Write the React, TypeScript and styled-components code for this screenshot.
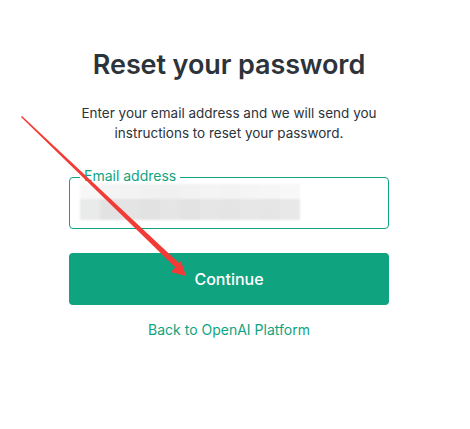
import React from "react";
import styled, { createGlobalStyle } from "styled-components";

const Global = createGlobalStyle`
  html, body { margin: 0; padding: 0; background: #fff; }
  body { font-family: Inter, "Noto Sans", Arial, sans-serif; }
`;

const Page = styled.div`
  position: relative;
  width: 458px;
  height: 429px;
  display: flex;
  flex-direction: column;
  align-items: center;
  padding-top: 46px;
  box-sizing: border-box;
`;

const Title = styled.h1`
  margin: 0;
  font-size: 27px;
  font-weight: 600;
  color: #2d333a;
  letter-spacing: -0.1px;
  line-height: 38px;
`;

const Desc = styled.p`
  margin: 19px 0 0;
  width: 320px;
  text-align: center;
  font-size: 13.5px;
  line-height: 20px;
  color: #2d333a;
`;

const Field = styled.div`
  position: relative;
  margin-top: 34px;
  width: 320px;
  height: 52px;
  box-sizing: border-box;
  border: 1px solid #10a37f;
  border-radius: 4px;
`;

const Label = styled.span`
  position: absolute;
  left: 10px;
  top: -10px;
  padding: 0 4px;
  background: #fff;
  font-size: 14px;
  line-height: 16px;
  color: #10a37f;
`;

const Blur = styled.div`
  position: absolute;
  left: 10px;
  top: 6px;
  display: grid;
  grid-template-columns: repeat(11, 20px);
  grid-template-rows: 15px 21px;
  filter: blur(1px);
`;

const Cell = styled.div<{ $c: string }>`
  background: ${(p) => p.$c};
`;

const Button = styled.button`
  margin-top: 24px;
  width: 320px;
  height: 52px;
  border: none;
  border-radius: 4px;
  background: #10a37f;
  color: #fff;
  font-family: inherit;
  font-size: 16px;
  font-weight: 500;
`;

const Link = styled.a`
  margin-top: 16px;
  font-size: 14px;
  color: #10a37f;
  text-decoration: none;
`;

const Arrow = styled.svg`
  position: absolute;
  left: 0;
  top: 0;
  pointer-events: none;
`;

const top = ["#f6f7f6", "#f4f4f4", "#f3f3f3", "#f1f1f1", "#f0f0f0", "#f2f2f2", "#f4f4f4", "#f3f3f3", "#f5f5f5", "#f6f6f6", "#f8f8f8"];
const bot = ["#e9eaea", "#e2e2e2", "#e4e4e4", "#e2e2e2", "#e5e5e5", "#e3e3e3", "#e6e6e6", "#e4e4e4", "#e7e7e7", "#e5e5e5", "#e8e8e8"];

export default function App() {
  return (
    <>
      <Global />
      <Page>
        <Title>Reset your password</Title>
        <Desc>Enter your email address and we will send you instructions to reset your password.</Desc>
        <Field>
          <Label>Email address</Label>
          <Blur>
            {top.map((c, i) => <Cell key={"t" + i} $c={c} />)}
            {bot.map((c, i) => <Cell key={"b" + i} $c={c} />)}
          </Blur>
        </Field>
        <Button>Continue</Button>
        <Link href="#">Back to OpenAI Platform</Link>
        <Arrow width="470" height="429" viewBox="0 0 470 429">
          <polygon points="21,117 22,116 180,264 176,268" fill="#f23a36" />
          <polygon points="186,276 171,272 181,261" fill="#f23a36" />
        </Arrow>
      </Page>
    </>
  );
}
